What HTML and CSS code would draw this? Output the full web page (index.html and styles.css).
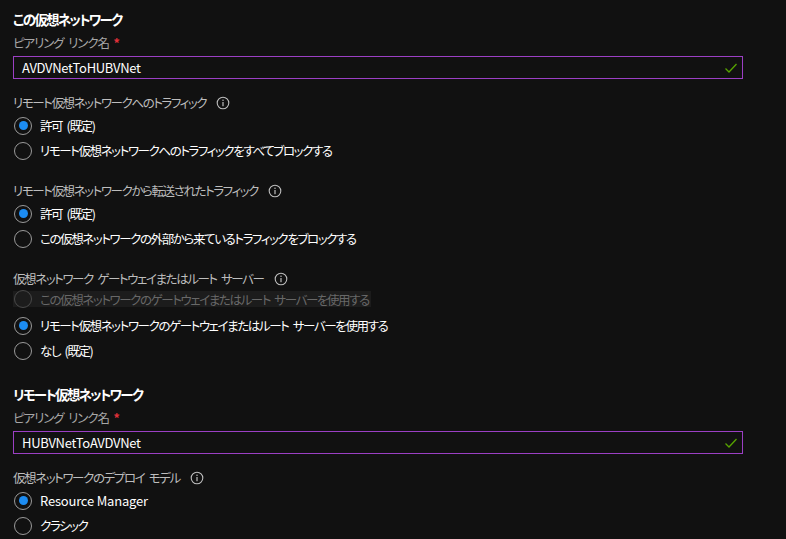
FILE: index.html
```html
<!DOCTYPE html>
<html lang="ja">
<head>
<meta charset="utf-8">
<link rel="stylesheet" href="styles.css">
</head>
<body>
<div class="page">
  <h2 class="section-title first">この仮想ネットワーク</h2>
  <div class="field-label">ピアリング リンク名 <span class="req">*</span></div>
  <div class="text-input">
    <span class="value">AVDVNetToHUBVNet</span>
    <svg class="check" width="14" height="12" viewBox="0 0 14 12"><path d="M1.5 6.5 L5 10 L12.5 2" fill="none" stroke="#57a300" stroke-width="1.3"/></svg>
  </div>

  <div class="group">
    <div class="group-label">リモート仮想ネットワークへのトラフィック<svg class="info" width="14" height="14" viewBox="0 0 14 14"><circle cx="7" cy="7" r="5.8" fill="none" stroke="#bdbdbd" stroke-width="1.1"/><rect x="6.4" y="6" width="1.2" height="4.2" fill="#bdbdbd"/><circle cx="7" cy="4.3" r="0.75" fill="#bdbdbd"/></svg></div>
    <div class="option"><span class="radio on"></span>許可 (既定)</div>
    <div class="option"><span class="radio"></span>リモート仮想ネットワークへのトラフィックをすべてブロックする</div>
  </div>

  <div class="group g2">
    <div class="group-label">リモート仮想ネットワークから転送されたトラフィック<svg class="info" width="14" height="14" viewBox="0 0 14 14"><circle cx="7" cy="7" r="5.8" fill="none" stroke="#bdbdbd" stroke-width="1.1"/><rect x="6.4" y="6" width="1.2" height="4.2" fill="#bdbdbd"/><circle cx="7" cy="4.3" r="0.75" fill="#bdbdbd"/></svg></div>
    <div class="option"><span class="radio on"></span>許可 (既定)</div>
    <div class="option"><span class="radio"></span>この仮想ネットワークの外部から来ているトラフィックをブロックする</div>
  </div>

  <div class="group g3">
    <div class="group-label">仮想ネットワーク ゲートウェイまたはルート サーバー<svg class="info" width="14" height="14" viewBox="0 0 14 14"><circle cx="7" cy="7" r="5.8" fill="none" stroke="#bdbdbd" stroke-width="1.1"/><rect x="6.4" y="6" width="1.2" height="4.2" fill="#bdbdbd"/><circle cx="7" cy="4.3" r="0.75" fill="#bdbdbd"/></svg></div>
    <div class="option disabled"><span class="dis-row"><span class="radio"></span>この仮想ネットワークのゲートウェイまたはルート サーバーを使用する</span></div>
    <div class="option"><span class="radio on"></span>リモート仮想ネットワークのゲートウェイまたはルート サーバーを使用する</div>
    <div class="option"><span class="radio"></span>なし (既定)</div>
  </div>

  <h2 class="section-title second">リモート仮想ネットワーク</h2>
  <div class="field-label">ピアリング リンク名 <span class="req">*</span></div>
  <div class="text-input">
    <span class="value">HUBVNetToAVDVNet</span>
    <svg class="check" width="14" height="12" viewBox="0 0 14 12"><path d="M1.5 6.5 L5 10 L12.5 2" fill="none" stroke="#57a300" stroke-width="1.3"/></svg>
  </div>

  <div class="group">
    <div class="group-label">仮想ネットワークのデプロイ モデル<svg class="info" width="14" height="14" viewBox="0 0 14 14"><circle cx="7" cy="7" r="5.8" fill="none" stroke="#bdbdbd" stroke-width="1.1"/><rect x="6.4" y="6" width="1.2" height="4.2" fill="#bdbdbd"/><circle cx="7" cy="4.3" r="0.75" fill="#bdbdbd"/></svg></div>
    <div class="option"><span class="radio on"></span><span class="latin">Resource Manager</span></div>
    <div class="option"><span class="radio"></span>クラシック</div>
  </div>
</div>
</body>
</html>
```

FILE: styles.css
```css
html, body {
  margin: 0;
  padding: 0;
  background: #111111;
  overflow: hidden;
}
body {
  font-family: "Noto Sans CJK JP", sans-serif;
  font-size: 12.5px;
  letter-spacing: -1.4px;
  word-spacing: 3px;
  font-feature-settings: "palt" 1;
  color: #ffffff;
}
.page {
  width: 730px;
  padding: 9px 0 0 13px;
}
.latin {
  font-size: 13px;
  letter-spacing: -0.2px;
  word-spacing: 0;
}
.section-title {
  margin: 0;
  font-size: 13.5px;
  letter-spacing: -1.7px;
  font-weight: bold;
  line-height: 20px;
  height: 20px;
  color: #ffffff;
}
.section-title.second {
  margin-top: 21px;
}
.field-label {
  margin-top: 4px;
  line-height: 20px;
  height: 20px;
  color: #a6a6a6;
  letter-spacing: -1.1px;
}
.req {
  color: #e0303a;
  font-weight: bold;
  letter-spacing: 0;
}
.text-input {
  margin-top: 3px;
  height: 21px;
  border: 1px solid #9b3fc4;
  display: flex;
  align-items: center;
  justify-content: space-between;
  padding: 0 4px 0 8px;
}
.text-input .value {
  color: #ffffff;
  font-size: 13px;
  letter-spacing: -0.3px;
  word-spacing: 0;
}
.check {
  display: block;
}
.group {
  margin-top: 14px;
}
.group.g2, .group.g3 {
  margin-top: 18px;
}
.group-label {
  display: flex;
  align-items: center;
  line-height: 20px;
  height: 20px;
  color: #bdbdbd;
}
.info {
  margin-left: 10px;
}
.option {
  display: flex;
  align-items: center;
  height: 25px;
  color: #ffffff;
}
.radio {
  box-sizing: border-box;
  width: 18px;
  height: 18px;
  margin: 0 8px 0 1px;
  border: 1px solid #9a9a9a;
  border-radius: 50%;
  position: relative;
  flex: none;
}
.radio.on::after {
  content: "";
  position: absolute;
  left: 3.5px;
  top: 3.5px;
  width: 9px;
  height: 9px;
  border-radius: 50%;
  background: #1c8cf2;
}
.option.disabled {
  height: 20px;
  margin-bottom: 4px;
}
.dis-row {
  display: flex;
  align-items: center;
  height: 16px;
  background: #1c1c1c;
  color: #686868;
  padding-right: 2px;
}
.dis-row .radio {
  border-color: #4a4a4a;
}
```
